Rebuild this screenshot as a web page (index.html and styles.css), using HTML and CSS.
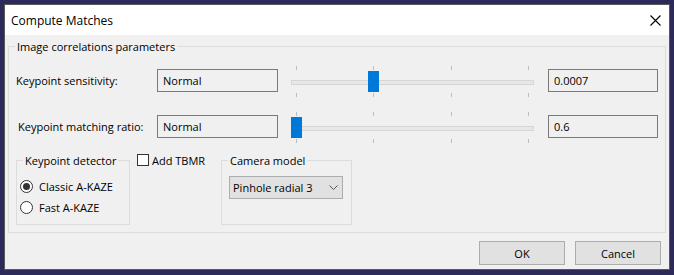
FILE: index.html
```html
<!DOCTYPE html>
<html>
<head>
<meta charset="utf-8">
<title>Compute Matches</title>
<link rel="stylesheet" href="styles.css">
</head>
<body>
<div class="window">
  <div class="titlebar">
    <span class="title">Compute Matches</span>
    <svg class="close" width="11" height="11" viewBox="0 0 11 11"><path d="M0.5 0.5L10.5 10.5M10.5 0.5L0.5 10.5" stroke="#000" stroke-width="1.1" fill="none"/></svg>
  </div>
  <div class="client">
    <fieldset class="group main">
      <legend>Image correlations parameters</legend>
      <div class="row r1">
        <span class="label">Keypoint sensitivity:</span>
        <div class="field">Normal</div>
        <div class="slider">
          <div class="ticks"><i></i><i></i><i></i><i></i></div>
          <div class="track"></div>
          <div class="ticks low"><i></i><i></i><i></i><i></i></div>
          <div class="thumb" style="left:77px"></div>
        </div>
        <div class="field value">0.0007</div>
      </div>
      <div class="row r2">
        <span class="label">Keypoint matching ratio:</span>
        <div class="field">Normal</div>
        <div class="slider">
          <div class="ticks"><i></i><i></i><i></i><i></i></div>
          <div class="track"></div>
          <div class="ticks low"><i></i><i></i><i></i><i></i></div>
          <div class="thumb" style="left:0px"></div>
        </div>
        <div class="field value">0.6</div>
      </div>
      <div class="bottom">
        <fieldset class="group detector">
          <legend>Keypoint detector</legend>
          <div class="radio"><span class="circle checked"></span><span>Classic A-KAZE</span></div>
          <div class="radio"><span class="circle"></span><span>Fast A-KAZE</span></div>
        </fieldset>
        <div class="check"><span class="box"></span><span>Add TBMR</span></div>
        <fieldset class="group camera">
          <legend>Camera model</legend>
          <div class="combo"><span>Pinhole radial 3</span><svg width="9" height="5" viewBox="0 0 9 5"><path d="M0.5 0.5L4.5 4.5L8.5 0.5" stroke="#555" stroke-width="1" fill="none"/></svg></div>
        </fieldset>
      </div>
    </fieldset>
    <div class="buttons">
      <div class="btn">OK</div>
      <div class="btn">Cancel</div>
    </div>
  </div>
</div>
</body>
</html>
```

FILE: styles.css
```css
* { box-sizing: border-box; }
html, body { margin: 0; padding: 0; }
body {
  background: #2b2a59;
  font-family: "Open Sans", "Noto Sans", sans-serif;
  font-size: 11px;
  color: #000;
  padding: 4px;
  height: 275px;
}
.window {
  width: 666px;
  height: 266px;
  border: 1px solid #595959;
  background: #f0f0f0;
  display: flex;
  flex-direction: column;
}
.titlebar {
  height: 30px;
  flex: none;
  background: #fff;
  display: flex;
  align-items: center;
  justify-content: space-between;
  padding: 0 8px 0 6px;
}
.title { font-size: 12px; line-height: 15px; }
.close { display: block; }
.client {
  flex: 1;
  padding: 4px 3px 0 3px;
  display: flex;
  flex-direction: column;
}
.group {
  margin: 0;
  padding: 0;
  border: 1px solid #dcdcdc;
  min-width: 0;
}
.group legend {
  margin-left: 6px;
  padding: 0 2px;
  line-height: 15px;
  font-size: 11px;
}
.main { padding-bottom: 7px; }
.row {
  display: flex;
  align-items: flex-start;
  height: 32px;
}
.r1 { margin-top: 12px; }
.r2 { margin-top: 14px; }
.label {
  width: 148px;
  padding-left: 7px;
  margin-top: 3px;
  height: 23px;
  line-height: 23px;
  white-space: nowrap;
}
.r2 .label { padding-left: 9px; }
.field {
  width: 121px;
  height: 23px;
  margin-top: 3px;
  border: 1px solid #7a7a7a;
  padding-left: 5px;
  line-height: 21px;
}
.value { width: 110px; margin-left: 14px; }
.slider {
  position: relative;
  width: 243px;
  height: 32px;
  margin-left: 13px;
}
.ticks {
  display: flex;
  justify-content: space-between;
  padding: 0 5px;
  height: 4px;
}
.ticks i {
  display: block;
  width: 1px;
  height: 4px;
  background: #bdbdbd;
}
.ticks.low { margin-top: 8px; }
.track {
  margin-top: 10px;
  height: 5px;
  border: 1px solid #d6d6d6;
  background: #e7e7e7;
}
.thumb {
  position: absolute;
  top: 5px;
  width: 11px;
  height: 21px;
  background: #0078d7;
}
.bottom {
  display: flex;
  align-items: stretch;
  margin-top: 9px;
  margin-left: 7px;
}
.detector {
  width: 114px;
  padding: 8px 0 6px 0;
}
.radio {
  display: flex;
  align-items: center;
  height: 21px;
  padding-left: 3px;
}
.circle {
  width: 13px;
  height: 13px;
  border: 1px solid #333;
  border-radius: 50%;
  background: #fff;
  margin-right: 6px;
  display: flex;
  align-items: center;
  justify-content: center;
}
.circle.checked::after {
  content: "";
  width: 7px;
  height: 7px;
  border-radius: 50%;
  background: #333;
}
.check {
  width: 84px;
  margin-left: 7px;
  display: flex;
  align-items: flex-start;
  line-height: 15px;
  height: 15px;
}
.box {
  width: 12px;
  height: 12px;
  margin-top: 1px;
  margin-right: 3px;
  border: 1px solid #333;
  background: #fff;
}
.camera {
  width: 131px;
  padding: 8px 0 0 0;
}
.combo {
  width: 114px;
  height: 23px;
  margin-left: 7px;
  border: 1px solid #adadad;
  background: #e1e1e1;
  display: flex;
  align-items: center;
  justify-content: space-between;
  padding: 0 4px 0 3px;
}
.combo svg { display: block; }
.buttons {
  display: flex;
  justify-content: flex-end;
  gap: 10px;
  margin-top: 8px;
  padding-right: 5px;
}
.btn {
  width: 86px;
  height: 24px;
  border: 1px solid #adadad;
  background: #e1e1e1;
  display: flex;
  align-items: center;
  justify-content: center;
}
```
